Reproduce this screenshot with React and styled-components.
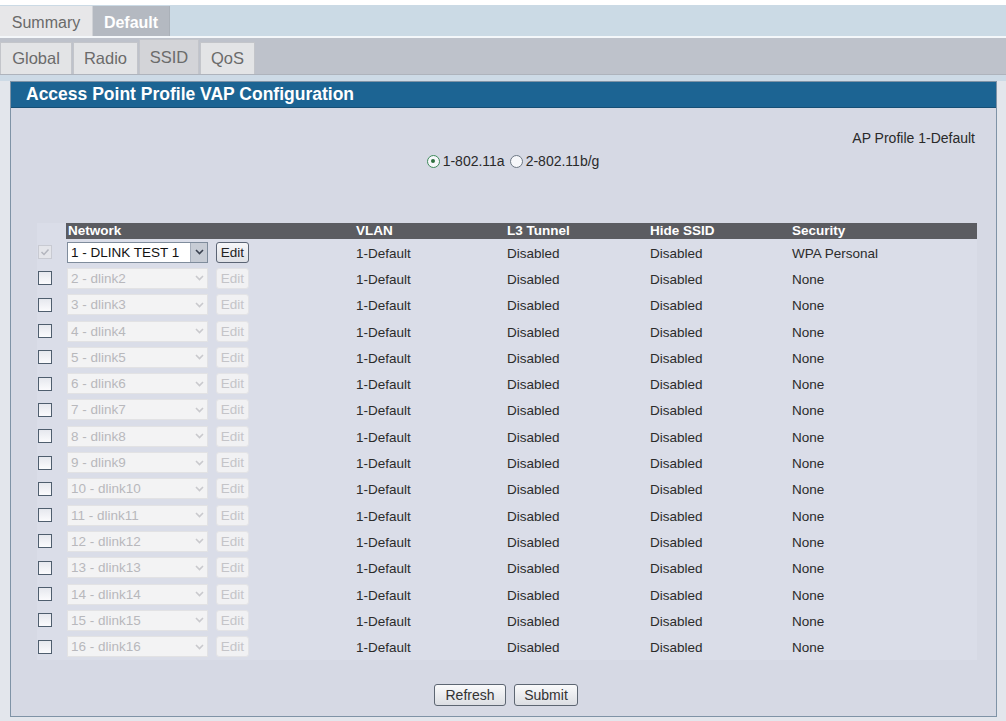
import React from "react";
import styled, { createGlobalStyle } from "styled-components";

const GlobalStyle = createGlobalStyle`
  html, body { margin: 0; padding: 0; background: #ffffff; }
  body { font-family: "Liberation Sans", Arial, sans-serif; }
  * { box-sizing: border-box; }
`;

const Page = styled.div`
  width: 1006px;
  height: 721px;
  overflow: hidden;
  padding-top: 5px;
  background: #ffffff;
  display: flex;
  flex-direction: column;
`;

const TopTabs = styled.div`
  height: 33px;
  background: #cbdae5;
  display: flex;
  align-items: stretch;
  border-bottom: 2px solid #f4f7fa;
  flex-shrink: 0;
`;

const TopTab = styled.div`
  width: ${(p) => p.$w}px;
  display: flex;
  align-items: center;
  justify-content: center;
  padding-top: 3px;
  font-size: 16px;
  font-weight: ${(p) => (p.$active ? "bold" : "normal")};
  color: ${(p) => (p.$active ? "#ffffff" : "#6a6a6a")};
  background: ${(p) => (p.$active ? "#b4b9c1" : "#e7e7e9")};
  border-right: 1px solid ${(p) => (p.$active ? "#aab0b8" : "#d0d2d6")};
  margin-top: 1px;
`;

const SubTabs = styled.div`
  height: 37px;
  background: #bec2cb;
  display: flex;
  align-items: flex-end;
  gap: 1px;
  border-bottom: 1px solid #aeb3bc;
  flex-shrink: 0;
`;

const SubTab = styled.div`
  width: ${(p) => p.$w}px;
  height: ${(p) => (p.$active ? 35 : 32)}px;
  display: flex;
  align-items: center;
  justify-content: center;
  font-size: 16.5px;
  color: #6b6b6b;
  background: ${(p) => (p.$active ? "#d3d4d8" : "#e3e4e6")};
  border: 1px solid #c3c5ca;
  border-bottom: none;
`;

const Content = styled.div`
  flex: 1;
  background: #e3e6ec;
  border-top: 6px solid #cddae6;
  padding: 0 9px 3px 10px;
  display: flex;
  flex-direction: column;
`;

const Panel = styled.div`
  border: 1px solid #7f93a6;
  background: #d6d9e4;
  display: flex;
  flex-direction: column;
`;

const PanelHeader = styled.div`
  height: 26px;
  background: #1c6493;
  border-bottom: 1px solid #164f75;
  color: #ffffff;
  font-weight: bold;
  font-size: 17.5px;
  display: flex;
  align-items: center;
  padding-left: 15px;
`;

const PanelBody = styled.div`
  display: flex;
  flex-direction: column;
  padding: 22px 21px 10px 26px;
`;

const ProfileLine = styled.div`
  text-align: right;
  font-size: 14px;
  line-height: 16px;
  color: #2a2a2a;
`;

const RadioRow = styled.div`
  margin-top: 6px;
  height: 18px;
  display: flex;
  justify-content: center;
  align-items: center;
  gap: 3px;
  font-size: 14px;
  color: #2a2a2a;
  padding-left: 14px;
`;

const RadioDot = styled.span`
  width: 13px;
  height: 13px;
  border-radius: 50%;
  border: 1px solid ${(p) => (p.$on ? "#3d8a5a" : "#6d7884")};
  background: #f6f7fa;
  display: inline-flex;
  align-items: center;
  justify-content: center;
  margin-left: ${(p) => (p.$on ? 0 : 2)}px;
  &::after {
    content: "";
    width: 4px;
    height: 4px;
    border-radius: 50%;
    background: ${(p) => (p.$on ? "#2f6f3f" : "transparent")};
  }
`;

const Table = styled.div`
  margin-top: 53px;
  display: grid;
  grid-template-columns: 29px 289px 151px 143px 142px 186px;
  grid-auto-rows: 26.3px;
  grid-template-rows: 16px;
  background: #dadde8;
  width: 940px;
`;

const HeadBlank = styled.div``;

const HeadCell = styled.div`
  background: #5b5c61;
  color: #ffffff;
  font-weight: bold;
  font-size: 13.5px;
  line-height: 16px;
  padding-left: ${(p) => p.$pad || 1}px;
  white-space: nowrap;
`;

const Cell = styled.div`
  display: flex;
  align-items: center;
  font-size: 13.5px;
  color: #2b2b2b;
  padding-left: ${(p) => p.$pad || 1}px;
  padding-top: 2px;
  white-space: nowrap;
`;

const CheckCell = styled.div`
  display: flex;
  align-items: center;
  padding-left: 1px;
`;

const Check = styled.span`
  width: 14px;
  height: 14px;
  border: 1px solid ${(p) => (p.$disabled ? "#c8cad2" : "#4f5e6e")};
  background: ${(p) =>
    p.$disabled ? "#e4e5ea" : "linear-gradient(#e6e8ee, #fbfbfd)"};
  display: inline-flex;
  align-items: center;
  justify-content: center;
`;

const NetCell = styled.div`
  display: flex;
  align-items: center;
  gap: 8px;
  padding-left: 1px;
`;

const Select = styled.div`
  width: 141px;
  height: 21px;
  display: flex;
  align-items: stretch;
  border: 1px solid ${(p) => (p.$disabled ? "#e2e2e4" : "#7f8c9c")};
  background: ${(p) => (p.$disabled ? "#f3f3f4" : "#ffffff")};
`;

const SelectText = styled.span`
  flex: 1;
  display: flex;
  align-items: center;
  padding-left: 3px;
  font-size: 13.5px;
  color: ${(p) => (p.$disabled ? "#b8b8bc" : "#111111")};
  white-space: nowrap;
  overflow: hidden;
`;

const SelectArrow = styled.span`
  width: 17px;
  display: flex;
  align-items: center;
  justify-content: center;
  background: ${(p) => (p.$disabled ? "#f3f3f4" : "#c7ccd5")};
  border-left: 1px solid ${(p) => (p.$disabled ? "#f3f3f4" : "#a6aebb")};
`;

const EditButton = styled.span`
  width: 33px;
  height: 21px;
  display: flex;
  align-items: center;
  justify-content: center;
  font-size: 13.5px;
  border-radius: 3px;
  border: 1px solid ${(p) => (p.$disabled ? "#e3e3e6" : "#5b6474")};
  background: ${(p) =>
    p.$disabled ? "#f1f1f3" : "linear-gradient(#f7f7f9, #dfe1e6)"};
  color: ${(p) => (p.$disabled ? "#c4c4c8" : "#222222")};
`;

const ButtonRow = styled.div`
  margin-top: 24px;
  display: flex;
  justify-content: center;
  gap: 8px;
`;

const ActionButton = styled.span`
  width: ${(p) => p.$w}px;
  height: 22px;
  display: flex;
  align-items: center;
  justify-content: center;
  font-size: 14px;
  color: #333333;
  border: 1px solid #5d6672;
  border-radius: 3px;
  background: linear-gradient(#fafafb, #dcdee3);
`;

const Chevron = ({ color }) => (
  <svg width="9" height="6" viewBox="0 0 9 6">
    <path d="M1 1 L4.5 4.5 L8 1" fill="none" stroke={color} strokeWidth="1.6" />
  </svg>
);

const Tick = () => (
  <svg width="10" height="8" viewBox="0 0 10 8">
    <path d="M1.5 4 L4 6.5 L8.5 1.5" fill="none" stroke="#b3b5be" strokeWidth="1.5" />
  </svg>
);

const rows = Array.from({ length: 16 }, (_, i) => {
  const n = i + 1;
  return {
    n,
    name: n === 1 ? "1 - DLINK TEST 1" : `${n} - dlink${n}`,
    vlan: "1-Default",
    l3: "Disabled",
    hide: "Disabled",
    security: n === 1 ? "WPA Personal" : "None",
  };
});

export default function App() {
  return (
    <>
      <GlobalStyle />
      <Page>
        <TopTabs>
          <TopTab $w={93}>Summary</TopTab>
          <TopTab $w={77} $active>
            Default
          </TopTab>
        </TopTabs>
        <SubTabs>
          <SubTab $w={72}>Global</SubTab>
          <SubTab $w={65}>Radio</SubTab>
          <SubTab $w={60} $active>
            SSID
          </SubTab>
          <SubTab $w={55}>QoS</SubTab>
        </SubTabs>
        <Content>
          <Panel>
            <PanelHeader>Access Point Profile VAP Configuration</PanelHeader>
            <PanelBody>
              <ProfileLine>AP Profile 1-Default</ProfileLine>
              <RadioRow>
                <RadioDot $on />
                <span>1-802.11a</span>
                <RadioDot />
                <span>2-802.11b/g</span>
              </RadioRow>
              <Table>
                <HeadBlank />
                <HeadCell $pad={2}>Network</HeadCell>
                <HeadCell>VLAN</HeadCell>
                <HeadCell>L3 Tunnel</HeadCell>
                <HeadCell>Hide SSID</HeadCell>
                <HeadCell>Security</HeadCell>
                {rows.map((r) => {
                  const dis = r.n !== 1;
                  return (
                    <React.Fragment key={r.n}>
                      <CheckCell>
                        <Check $disabled={!dis}>{!dis && <Tick />}</Check>
                      </CheckCell>
                      <NetCell>
                        <Select $disabled={dis}>
                          <SelectText $disabled={dis}>{r.name}</SelectText>
                          <SelectArrow $disabled={dis}>
                            <Chevron color={dis ? "#c9c9cd" : "#3b4250"} />
                          </SelectArrow>
                        </Select>
                        <EditButton $disabled={dis}>Edit</EditButton>
                      </NetCell>
                      <Cell>{r.vlan}</Cell>
                      <Cell>{r.l3}</Cell>
                      <Cell>{r.hide}</Cell>
                      <Cell>{r.security}</Cell>
                    </React.Fragment>
                  );
                })}
              </Table>
              <ButtonRow>
                <ActionButton $w={72}>Refresh</ActionButton>
                <ActionButton $w={64}>Submit</ActionButton>
              </ButtonRow>
            </PanelBody>
          </Panel>
        </Content>
      </Page>
    </>
  );
}
